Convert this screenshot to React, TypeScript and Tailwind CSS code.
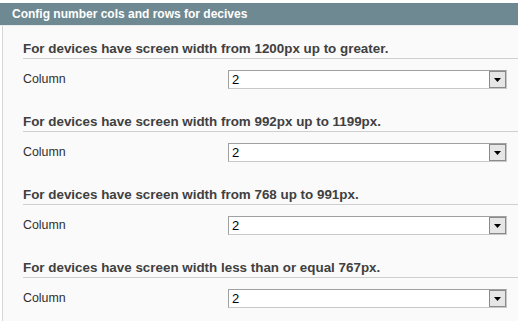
const sections = [
  "For devices have screen width from 1200px up to greater.",
  "For devices have screen width from 992px up to 1199px.",
  "For devices have screen width from 768 up to 991px.",
  "For devices have screen width less than or equal 767px.",
];

function SelectBox({ value }: { value: string }) {
  return (
    <div className="flex items-stretch w-[279px] h-[19px] bg-white border border-t-[#a0a0a0] border-l-[#a0a0a0] border-r-[#c8c8c8] border-b-[#c8c8c8]">
      <div className="flex-1 pl-[3px] text-[13px] leading-[17px] text-black">{value}</div>
      <div className="w-[17px] flex items-center justify-center bg-[#e6e6e6] border border-[#8a8a8a]">
        <svg width="7" height="4" viewBox="0 0 7 4">
          <polygon points="0,0 7,0 3.5,4" fill="#000" />
        </svg>
      </div>
    </div>
  );
}

export default function App() {
  return (
    <div className="w-[518px] h-[321px] bg-white pt-[3px] overflow-hidden font-['Liberation_Sans',Arial,sans-serif]">
      {/* Head */}
      <div className="h-[22px] bg-[#6f8992] pl-3 flex items-center text-[12px] font-bold text-white">
        Config number cols and rows for decives
      </div>
      <div className="h-px bg-[#e8ecee]" />

      {/* Fieldset */}
      <div className="ml-[2px] h-full bg-[#fafafa] border-l border-[#d6d6d6] pl-[20px] pt-[14px]">
        {sections.map((title) => (
          <div key={title} className="mb-[24px]">
            <div className="h-[19px] border-b border-[#cfcfcf] text-[13.4px] font-bold text-[#404040] leading-[17px]">
              {title}
            </div>
            <div className="flex items-center mt-[11px]">
              <div className="w-[205px] text-[12.4px] text-[#2f2f2f]">Column</div>
              <SelectBox value="2" />
            </div>
          </div>
        ))}
      </div>
    </div>
  );
}
